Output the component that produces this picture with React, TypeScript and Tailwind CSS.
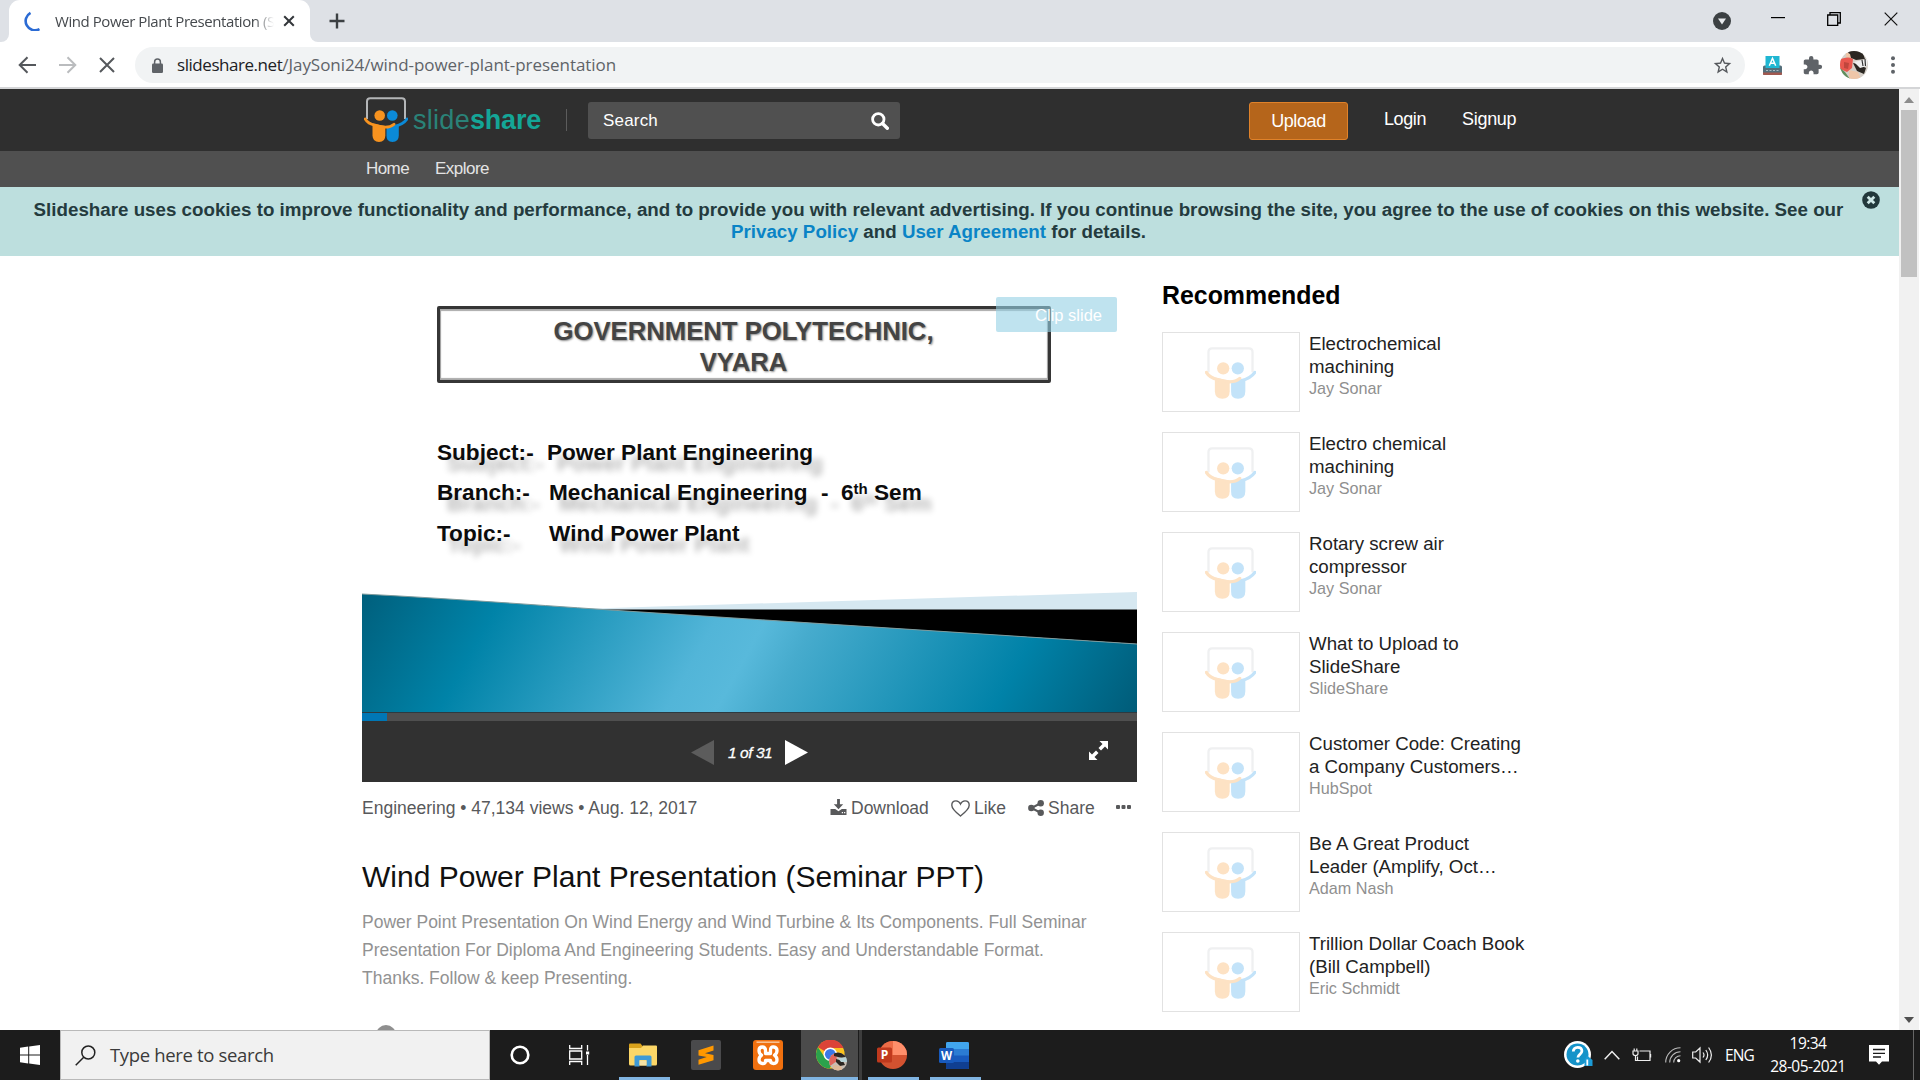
import React from "react";

const ARIAL = "font-['Liberation_Sans',Arial,sans-serif]";
const SEGOE = "font-['Open_Sans','Noto_Sans',sans-serif]";

function SlideshareMark({ faded = false, className = "" }: { faded?: boolean; className?: string }) {
  const screen = faded ? "#eff0f1" : "#b4b6b8";
  const orange = faded ? "#fde2c4" : "#f8931f";
  const blue = faded ? "#c3e3f9" : "#0b8ad8";
  return (
    <svg viewBox="0 0 44 46" className={className} fill="none" preserveAspectRatio="none">
      <path d="M3 22V4.500Q3 1.200 6.200 1.200h31.600Q41 1.200 41 4.500V22" stroke={screen} strokeWidth="2" />
      <circle cx="15.700" cy="18.500" r="5.300" fill={orange} />
      <circle cx="28.300" cy="18.500" r="5.300" fill={blue} />
      <path d="M22.500 29.500Q28 28 34.800 27.500V38.500Q34.800 45 28.500 45T22.500 38.500Z" fill={blue} />
      <path d="M43 22Q39.500 27.200 31 29.300" stroke={blue} strokeWidth="2.800" strokeLinecap="round" />
      <path d="M8.500 26.500L21.300 29V38.500Q21.300 45 15 45T8.500 38.500Z" fill={orange} />
      <path d="M1.200 22Q4 26.800 11 28.200Q24 32.600 30 27.200" stroke={orange} strokeWidth="2.800" strokeLinecap="round" />
    </svg>
  );
}

function TabStrip() {
  return (
    <div className="flex h-[42px] items-start bg-[#dee1e6]">
      <div className="flex h-[42px] w-[9px] items-end bg-white">
        <div className="h-[42px] w-[9px] rounded-br-[8px] bg-[#dee1e6]" />
      </div>
      <div className="flex h-[42px] w-[301px] items-center rounded-t-[11px] bg-white pl-[15px]">
        <svg viewBox="0 0 18 20" className="h-[20px] w-[18px]" fill="none">
          <path d="M6.500 1.800A9 9 0 0 0 15.500 18.200" stroke="#2b6bd4" strokeWidth="2.600" />
        </svg>
        <span className={`${SEGOE} ml-[13px] w-[219px] text-[15px] tracking-[-0.430px] whitespace-nowrap text-[#45494d] [mask-image:linear-gradient(to_right,black_91%,transparent)]`}>
          Wind Power Plant Presentation (S
        </span>
        <svg viewBox="0 0 12 12" className="ml-[9px] h-[12px] w-[12px]" stroke="#33363a" strokeWidth="2">
          <path d="M1.200 1.200l9.600 9.600M10.800 1.200l-9.600 9.600" />
        </svg>
      </div>
      <div className="flex h-[42px] w-[9px] items-end bg-white">
        <div className="h-[42px] w-[9px] rounded-bl-[8px] bg-[#dee1e6]" />
      </div>
      <svg viewBox="0 0 16 16" className="mt-[13px] ml-[10px] h-[16px] w-[16px]" stroke="#3c4043" strokeWidth="2.400">
        <path d="M8 .5v15M.5 8h15" />
      </svg>
      <svg viewBox="0 0 18 18" className="mt-[12px] ml-auto h-[18px] w-[18px]">
        <circle cx="9" cy="9" r="9" fill="#3c4043" />
        <path d="M5 6.500h8L9 12.500Z" fill="#e8eaed" />
      </svg>
      <svg viewBox="0 0 14 14" className="mt-[11px] ml-[40px] h-[14px] w-[14px]" stroke="#000" strokeWidth="1.200">
        <path d="M0 6.600h14" />
      </svg>
      <svg viewBox="0 0 14 14" className="mt-[12px] ml-[42px] h-[14px] w-[14px]" fill="none" stroke="#000" strokeWidth="1.300">
        <path d="M.7 3h10v10.300H.7ZM3 3V.7h10.300v10.300H10.700" />
      </svg>
      <svg viewBox="0 0 14 14" className="mt-[12px] mr-[22px] ml-[43px] h-[14px] w-[14px]" stroke="#111" strokeWidth="1.200">
        <path d="M.7.700l12.600 12.600M13.300.700L.7 13.300" />
      </svg>
    </div>
  );
}

function Avatar() {
  return (
    <svg viewBox="0 0 28 28" className="ml-[17px] h-[28px] w-[28px]">
      <defs>
        <clipPath id="avatarClip">
          <circle cx="14" cy="14" r="14" />
        </clipPath>
      </defs>
      <g clipPath="url(#avatarClip)">
        <path fill="#d5cfc8" d="M0 0h28v28H0z" />
        <path fill="#e9584f" d="M0 8l9-2 4 2-1 9-5 4-7-3z" />
        <path fill="#2b2723" d="M8 0h14l3 8-9 1-7-3zM13 12l5 1 8 4-2 6-7-3z" />
        <path fill="#efc6a8" d="M6 1l4 2 1 4-5-1zM9 19l9 2 3 7H9z" />
        <path fill="#efefef" d="M14 11l13-3v7l-7 2z" />
        <path stroke="#333" strokeWidth="1.200" d="M22 9l1 6M25 8l.5 7" />
        <path fill="#5f8f5c" d="M0 17l5 4 5 7H2z" />
        <path fill="#c0463d" d="M4 11l5 1-1 6-4-1z" />
      </g>
    </svg>
  );
}

function AddressBar() {
  return (
    <div className="flex h-[45px] items-center bg-white pt-[1px] pl-[18px]">
      <svg viewBox="0 0 18 18" className="h-[18px] w-[18px]" fill="none" stroke="#55585c" strokeWidth="2">
        <path d="M9.500 1.200L1.700 9l7.800 7.800M1.700 9H18" />
      </svg>
      <svg viewBox="0 0 18 18" className="ml-[23px] h-[18px] w-[18px]" fill="none" stroke="#babcbe" strokeWidth="2">
        <path d="M8.500 1.200L16.300 9l-7.800 7.800M16.300 9H0" />
      </svg>
      <svg viewBox="0 0 16 16" className="ml-[22px] h-[16px] w-[16px]" fill="none" stroke="#55585c" strokeWidth="2">
        <path d="M1 1l14 14M15 1L1 15" />
      </svg>
      <div className="ml-[20px] flex h-[36px] w-[1610px] items-center rounded-full bg-[#f1f3f4] pl-[17px]">
        <svg viewBox="0 0 11 15" className="h-[15px] w-[11px]">
          <path d="M2.600 6.500V4a2.900 2.900 0 0 1 5.800 0v2.500" fill="none" stroke="#5f6368" strokeWidth="1.500" />
          <rect y="5.500" width="11" height="9.500" rx="1.200" fill="#5f6368" />
        </svg>
        <span className={`${SEGOE} ml-[14px] text-[17px] whitespace-nowrap`}>
          <span className="tracking-[-0.450px] text-[#202124]">slideshare.net</span>
          <span className="tracking-[-0.050px] text-[#5f6368]">/JaySoni24/wind-power-plant-presentation</span>
        </span>
        <svg viewBox="0 0 24 24" className="mr-[12px] ml-auto h-[21px] w-[21px]" fill="#55585c">
          <path d="M22 9.240l-7.190-.62L12 2 9.190 8.630 2 9.240l5.460 4.730L5.820 21 12 17.270 18.180 21l-1.630-7.030L22 9.240zM12 15.400l-3.760 2.270 1-4.280-3.320-2.880 4.380-.38L12 6.100l1.710 4.040 4.380.38-3.320 2.880 1 4.280L12 15.400z" />
        </svg>
      </div>
      <svg viewBox="0 0 19 19" className="ml-[18px] h-[19px] w-[19px]">
        <rect x="0" y="9.500" width="19" height="9.500" rx="1.500" fill="#546e7a" />
        <path fill="#a1584f" d="M0 16.500h19V18q0 1-1 1H1q-1 0-1-1z" />
        <path d="M3 14.500h2M6.500 14.500h2M10 14.500h2M13.500 14.500h2" stroke="#a9bac1" strokeWidth="1.200" />
        <path fill="#1fb6d2" d="M2.500 0h14v12h-14z" />
        <path d="M6.300 9.800L9.500 2.300l3.200 7.500M7.400 7.300h4.200" fill="none" stroke="#fff" strokeWidth="1.500" />
      </svg>
      <svg viewBox="0 0 24 24" className="ml-[20px] h-[21px] w-[21px]" fill="#5f6368">
        <path d="M20.500 11H19V7c0-1.100-.9-2-2-2h-4V3.500a2.500 2.500 0 0 0-5 0V5H4c-1.100 0-1.990.9-1.990 2v3.800H3.500c1.490 0 2.700 1.210 2.700 2.700s-1.210 2.700-2.700 2.700H2V20c0 1.100.9 2 2 2h3.800v-1.500c0-1.490 1.210-2.700 2.700-2.700 1.490 0 2.700 1.210 2.700 2.700V22H17c1.100 0 2-.9 2-2v-4h1.500a2.500 2.500 0 0 0 0-5z" />
      </svg>
      <Avatar />
      <svg viewBox="0 0 4 18" className="ml-[23px] h-[18px] w-[4px]" fill="#5f6368">
        <circle cx="2" cy="2.200" r="2" />
        <circle cx="2" cy="9" r="2" />
        <circle cx="2" cy="15.800" r="2" />
      </svg>
    </div>
  );
}

function SiteHeader() {
  return (
    <header className={ARIAL}>
      <div className="flex h-[62px] items-start bg-[#2f2f2f] pl-[364px] text-white">
        <SlideshareMark className="mt-[8px] h-[46px] w-[44px]" />
        <div className="mt-[15px] ml-[5px] text-[27px] leading-[32px]">
          <span className="tracking-[0.290px] text-[#2a8278]">slide</span>
          <span className="font-bold tracking-[-0.210px] text-[#14a697]">share</span>
        </div>
        <div className="mt-[20px] ml-[25px] h-[22px] w-px bg-[#5c5c5c]" />
        <div className="mt-[13px] ml-[21px] flex h-[37px] w-[312px] items-center justify-between rounded-[3px] bg-[#505050] pr-[11px] pl-[15px]">
          <span className="text-[17px] tracking-[0.190px]">Search</span>
          <svg viewBox="0 0 18 18" className="h-[18px] w-[18px]" fill="none" stroke="#fff">
            <circle cx="7.300" cy="7.300" r="5.700" strokeWidth="2.800" />
            <path d="M11.500 11.500l4.800 4.800" strokeWidth="3.400" strokeLinecap="round" />
          </svg>
        </div>
        <div className="mt-[13px] ml-[349px] flex h-[38px] w-[99px] items-center justify-center rounded-[3px] border border-[#e0822a] bg-[#b5651b] text-[18px] tracking-[-0.400px]">
          Upload
        </div>
        <span className="mt-[17px] ml-[36px] text-[18px] leading-[26px] tracking-[-0.400px]">Login</span>
        <span className="mt-[17px] ml-[36px] text-[18px] leading-[26px] tracking-[-0.300px]">Signup</span>
      </div>
      <nav className="flex h-[36px] items-center bg-[#505050] pl-[366px] text-[17px] text-[#e4e4e4]">
        <span className="tracking-[-0.580px]">Home</span>
        <span className="ml-[26px] tracking-[-0.520px]">Explore</span>
      </nav>
      <div className="relative h-[69px] bg-[#bddfde] pt-[12px] text-center text-[18.750px] leading-[22px] font-bold text-[#243b3e]">
        <p className="mr-[22px] whitespace-nowrap">
          Slideshare uses cookies to improve functionality and performance, and to provide you with relevant advertising. If you continue browsing the site, you agree to the use of cookies on this website. See our
          <br />
          <span className="text-[#0a84c6]">Privacy Policy</span> and <span className="text-[#0a84c6]">User Agreement</span> for details.
        </p>
        <svg viewBox="0 0 18 18" className="absolute top-[4px] right-[19px] h-[18px] w-[18px]">
          <circle cx="9" cy="9" r="8.800" fill="#22383b" />
          <path d="M5.700 5.700l6.600 6.600M12.300 5.700l-6.600 6.600" stroke="#cfe8e7" strokeWidth="2.800" />
        </svg>
      </div>
    </header>
  );
}

const SHADOW = "[text-shadow:10px_11px_6px_rgba(0,0,0,0.28)]";

function Slide() {
  return (
    <div className="relative flex h-[456px] flex-col bg-white">
      <div className="mt-[50px] ml-[75px] flex h-[77px] w-[614px] shrink-0 flex-col items-center justify-center rounded-[2px] border-[3px] border-[#363636] pt-[5px] pr-[1px] text-[25.700px] leading-[31px] font-bold text-[#444] shadow-[inset_0_2px_1px_#aaa,inset_0_-2px_1px_#aaa,inset_1px_0_1px_#999,inset_-1px_0_1px_#999] [text-shadow:1px_1px_2px_rgba(0,0,0,0.45)]">
        <span>GOVERNMENT POLYTECHNIC,</span>
        <span>VYARA</span>
      </div>
      <div className={`mt-[50px] ml-[75px] flex flex-col text-[22.600px] leading-[39.500px] font-bold whitespace-nowrap text-[#0c0c0c] ${SHADOW}`}>
        <div className="flex">
          <span className="w-[110px]">Subject:-</span>
          <span>Power Plant Engineering</span>
        </div>
        <div className="flex">
          <span className="w-[112px]">Branch:-</span>
          <span className="w-[272px]">Mechanical Engineering</span>
          <span className="w-[20px]">-</span>
          <span>
            6<span className="relative top-[-6px] text-[15px]">th</span> Sem
          </span>
        </div>
        <div className="flex">
          <span className="w-[112px]">Topic:-</span>
          <span>Wind Power Plant</span>
        </div>
      </div>
      <svg viewBox="0 0 775 120" className="mt-auto h-[120px] w-[775px] shrink-0">
        <defs>
          <linearGradient id="wave" gradientUnits="userSpaceOnUse" x1="0" y1="0" x2="642" y2="356">
            <stop offset="0" stopColor="#005f7c" />
            <stop offset="0.170" stopColor="#0083a8" />
            <stop offset="0.440" stopColor="#52b5d8" />
            <stop offset="0.500" stopColor="#58b9db" />
            <stop offset="0.560" stopColor="#46abcd" />
            <stop offset="0.830" stopColor="#0082a8" />
            <stop offset="1" stopColor="#005c79" />
          </linearGradient>
        </defs>
        <path d="M215 17L775 0v18H240Z" fill="#d6e8f1" />
        <path d="M235 17.500H775V52Z" fill="#000" />
        <path d="M0 2C80 6 160 12 248 18L775 52V120H0Z" fill="url(#wave)" />
        <path d="M0 2C80 6 160 12 248 18L775 52" fill="none" stroke="#7e9a9c" strokeWidth="1" />
      </svg>
      <div className="absolute top-[41px] left-[634px] flex h-[35px] w-[121px] items-center justify-end rounded-[2px] bg-[#94d0e4]/60 pt-[2px] pr-[15px] text-[16.500px] text-white">
        Clip slide
      </div>
    </div>
  );
}

function PlayerControls() {
  return (
    <div>
      <div className="h-[9px] border-t border-[#2d3a40] bg-[#4f4f4f]">
        <div className="h-[8px] w-[25px] bg-[#0077b5]" />
      </div>
      <div className="flex h-[61px] items-center bg-[#313131] pt-[2px]">
        <svg viewBox="0 0 23 25" className="ml-[329px] h-[25px] w-[23px]">
          <path d="M23 0v25L0 12.500Z" fill="#5c5c5c" />
        </svg>
        <span className="ml-[14px] w-[57px] text-[15.500px] tracking-[-0.450px] whitespace-nowrap text-white italic [-webkit-text-stroke:0.300px_white]">1 of 31</span>
        <svg viewBox="0 0 23 25" className="h-[25px] w-[23px]">
          <path d="M0 0v25L23 12.500Z" fill="#fff" />
        </svg>
        <svg viewBox="0 0 19 19" className="mr-[29px] mb-[4px] ml-auto h-[19px] w-[19px]" fill="#fff">
          <path d="M10.500 0H19v8.500l-3-3-4 4L9.500 7l4-4ZM8.500 19H0v-8.500l3 3 4-4L9.500 12l-4 4Z" />
        </svg>
      </div>
    </div>
  );
}

function MetaRow() {
  return (
    <div className="mt-[13px] flex h-[26px] items-center text-[17.500px] whitespace-nowrap text-[#58595b]">
      <span>Engineering • 47,134 views • Aug. 12, 2017</span>
      <svg viewBox="0 0 17 17" className="mb-[3px] ml-auto h-[16px] w-[17px]" fill="#58595b">
        <path d="M7 0h3v5.500h3.500L8.500 11 3.500 5.500H7ZM0 10.500h5l3.500 2.600L12 10.500h5V17H0Z" />
        <path d="M12 14.500h1.300M14.400 14.500h1.300" stroke="#fff" strokeWidth="1.200" />
      </svg>
      <span className="ml-[4px] w-[78px]">Download</span>
      <svg viewBox="0 0 19 17" className="ml-[22px] h-[17px] w-[19px]" fill="none" stroke="#58595b" strokeWidth="1.400">
        <path d="M9.500 16C5 12.500.8 9.200.8 5.300.8 2.600 2.700.9 5 .9c2 0 3.600 1.200 4.500 3.100C10.400 2.100 12 .9 14 .9c2.300 0 4.200 1.700 4.200 4.400 0 3.900-4.200 7.200-8.700 10.700Z" />
      </svg>
      <span className="ml-[4px] w-[33px]">Like</span>
      <svg viewBox="0 0 16 16" className="ml-[21px] h-[16px] w-[16px]" fill="#58595b">
        <path d="M13 3L3.500 8l9.500 5" fill="none" stroke="#58595b" strokeWidth="2" />
        <circle cx="3.300" cy="8" r="3.200" />
        <circle cx="12.700" cy="3.200" r="3.200" />
        <circle cx="12.700" cy="12.800" r="3.200" />
      </svg>
      <span className="ml-[4px] w-[48px]">Share</span>
      <svg viewBox="0 0 15 4" className="mr-[6px] mb-[2px] ml-[20px] h-[4px] w-[15px]" fill="#58595b">
        <rect width="4" height="4" rx="1" />
        <rect x="5.500" width="4" height="4" rx="1" />
        <rect x="11" width="4" height="4" rx="1" />
      </svg>
    </div>
  );
}

const recommended = [
  { lines: ["Electrochemical", "machining"], author: "Jay Sonar" },
  { lines: ["Electro chemical", "machining"], author: "Jay Sonar" },
  { lines: ["Rotary screw air", "compressor"], author: "Jay Sonar" },
  { lines: ["What to Upload to", "SlideShare"], author: "SlideShare" },
  { lines: ["Customer Code: Creating", "a Company Customers…"], author: "HubSpot" },
  { lines: ["Be A Great Product", "Leader (Amplify, Oct…"], author: "Adam Nash" },
  { lines: ["Trillion Dollar Coach Book", "(Bill Campbell)"], author: "Eric Schmidt" },
];

function Recommended() {
  return (
    <aside className="ml-[25px] w-[380px]">
      <h2 className="mt-[25px] text-[24.900px] leading-[28px] font-bold text-black">Recommended</h2>
      <ul className="mt-[23px]">
        {recommended.map((item, i) => (
          <li key={i} className="flex h-[100px] items-start">
            <div className="flex h-[80px] w-[138px] items-start justify-center border border-[#e2e2e2] bg-white pt-[14px] pr-[2px]">
              <SlideshareMark faded className="h-[53px] w-[51px]" />
            </div>
            <div className="ml-[9px] whitespace-nowrap">
              <p className="text-[18.700px] leading-[23px] text-[#222]">
                {item.lines[0]}
                <br />
                {item.lines[1]}
              </p>
              <p className="text-[16.200px] leading-[21px] text-[#8f8f8f]">{item.author}</p>
            </div>
          </li>
        ))}
      </ul>
    </aside>
  );
}

function Scrollbar() {
  return (
    <div className="flex w-[20px] flex-col items-center bg-[#f1f1f1]">
      <svg viewBox="0 0 10 6" className="mt-[8px] h-[6px] w-[10px]" fill="#8c8c8c">
        <path d="M0 6L5 0l5 6Z" />
      </svg>
      <div className="mt-[7px] h-[167px] w-[16px] bg-[#c1c1c1]" />
      <svg viewBox="0 0 10 6" className="mt-auto mb-[7px] h-[6px] w-[10px]" fill="#505050">
        <path d="M0 0h10L5 6Z" />
      </svg>
    </div>
  );
}

function ChromeIcon() {
  return (
    <svg viewBox="0 0 32 31" className="h-[31px] w-[32px]">
      <defs>
        <clipPath id="chromeBadge">
          <circle cx="22" cy="21.500" r="9" />
        </clipPath>
      </defs>
      <circle cx="14.300" cy="14.300" r="14.300" fill="#fcc31e" />
      <path d="M14.300 14.300L1.920 7.150A14.300 14.300 0 0 1 27.500 8H14.300Z" fill="#dc4437" />
      <path d="M1.920 7.150A14.300 14.300 0 0 0 13.500 28.600L20 18 8.500 17Z" fill="#2ba24c" />
      <circle cx="14.300" cy="14.300" r="6.800" fill="#fff" />
      <circle cx="14.300" cy="14.300" r="5.400" fill="#3b78e7" />
      <g clipPath="url(#chromeBadge)">
        <path fill="#c9beb4" d="M12 12h20v19H12z" />
        <path fill="#e0655b" d="M12 15l8-2 1 8-7 5z" />
        <path fill="#2c2621" d="M18 12h11l2 5-5 1-8-2zM20 19l7 2 2 4-5 1-4-4z" />
        <path fill="#b9d3d6" d="M22 18l10-1v5l-7 0z" />
        <path fill="#dfb897" d="M17 25l8 1 2 5H17z" />
      </g>
    </svg>
  );
}

function TaskbarApp({ open = false, children }: { open?: boolean; children: React.ReactNode }) {
  return (
    <div className="flex h-[50px] w-[51px] flex-col items-center">
      <div className="flex h-[47px] items-center pt-[3px]">{children}</div>
      {open && <div className="h-[3px] w-full bg-[#80b4e2]" />}
    </div>
  );
}

function Taskbar() {
  return (
    <footer className={`${SEGOE} flex h-[50px] shrink-0 items-stretch bg-[#1c1c1c] text-white`}>
      <div className="flex w-[60px] items-center justify-center">
        <svg viewBox="0 0 20 20" className="h-[20px] w-[20px]" fill="#fff">
          <path d="M0 2.800L8.200 1.600V9.500H0ZM9.200 1.500L20 0v9.500H9.200ZM0 10.500h8.200v7.900L0 17.200ZM9.200 10.500H20V20L9.200 18.500Z" />
        </svg>
      </div>
      <div className="flex w-[430px] items-center border border-[#b9b9b9] bg-[#f1f1f1] pl-[14px] text-[#3a3a3a]">
        <svg viewBox="0 0 21 21" className="h-[21px] w-[21px]" fill="none" stroke="#222" strokeWidth="1.500">
          <circle cx="13.300" cy="7.500" r="6.500" />
          <path d="M8.700 12.200L.7 20.200" />
        </svg>
        <span className="ml-[14px] text-[18.500px] tracking-[-0.340px] whitespace-nowrap">Type here to search</span>
      </div>
      <svg viewBox="0 0 20 20" className="ml-[20px] h-[20px] w-[20px] self-center" fill="none">
        <circle cx="10" cy="10" r="8.300" stroke="#fff" strokeWidth="2.600" />
      </svg>
      <svg viewBox="0 0 21 20" className="ml-[39px] h-[20px] w-[21px] self-center" fill="none" stroke="#fff" strokeWidth="1.300">
        <path d="M.7 0v3.500h12V0M.7 20v-3.500h12V20M.7 6h12v8H.7ZM18.500 0v5.500M18.500 10v10" />
        <path d="M17 6.500h3.200v3H17Z" fill="#fff" stroke="none" />
      </svg>
      <div className="ml-[29px] flex">
        <TaskbarApp open>
          <svg viewBox="0 0 28 24" className="mr-[3px] h-[24px] w-[28px]">
            <path fill="#d9a21b" d="M0 1.500Q0 .5 1 .5h10.500l2 2.500v3H0Z" />
            <path fill="#fbd667" d="M0 5h12l2-2.500h13q1 0 1 1V21q0 1.500-1.500 1.500h-25Q0 22.500 0 21Z" />
            <path fill="#3e9ad6" d="M5.500 14q0-1.500 1.500-1.500h14q1.500 0 1.500 1.500v9.500h-5V17h-7v6.500h-5Z" />
            <path fill="#f6e3a5" d="M10.500 17.500h7v5h-7z" />
          </svg>
        </TaskbarApp>
        <div className="ml-[10px]">
          <TaskbarApp>
            <svg viewBox="0 0 30 30" className="h-[30px] w-[30px]">
              <rect width="30" height="30" rx="2" fill="#4a4a4c" />
              <path fill="#ff9800" d="M7.500 10.200L22.500 5.500v5l-8.500 2.700 8.500 1.800v5.300L7.500 24.800v-5l8.200-2.700-8.200-1.700Z" />
            </svg>
          </TaskbarApp>
        </div>
        <div className="ml-[11px]">
          <TaskbarApp>
            <svg viewBox="0 0 30 30" className="h-[30px] w-[30px]">
              <rect width="30" height="30" rx="3" fill="#f0700f" />
              <path d="M3.500 2.200h23" stroke="#f7c59a" strokeWidth="1.500" />
              <path d="M12.500 13.500V10.500Q12.500 7 9.300 7T6 10.500Q6 13.500 8.500 15.200Q6 17 6 20T9.300 23.500 12.500 20.500H17.500Q17.500 23.500 20.700 23.500T24 20Q24 17 21.500 15.200Q24 13.500 24 10.500T20.700 7 17.500 10.500V13.500Z" fill="none" stroke="#fff" strokeWidth="3.300" strokeLinejoin="round" />
            </svg>
          </TaskbarApp>
        </div>
        <div className="ml-[8px] flex h-[50px]">
          <div className="flex h-[50px] w-[57px] flex-col items-center bg-[#4b4b4b]">
            <div className="flex h-[47px] items-center pt-[3px] pl-[5px]">
              <ChromeIcon />
            </div>
            <div className="h-[3px] w-full bg-[#80b4e2]" />
          </div>
          <div className="w-[4px] border-l border-[#1c1c1c] bg-[#3d3d3d]" />
        </div>
        <div className="ml-[6px]">
          <TaskbarApp open>
            <svg viewBox="0 0 30 28" className="mr-[3px] h-[28px] w-[30px]">
              <circle cx="16" cy="14" r="14" fill="#d35230" />
              <path d="M16 0a14 14 0 0 1 14 14H16Z" fill="#ff8f6b" />
              <path d="M16 0a14 14 0 0 0-14 14h14Z" fill="#ed6c47" />
              <rect y="6.500" width="15" height="15" rx="1.500" fill="#c0391d" />
              <text x="7.400" y="18.300" textAnchor="middle" fontSize="12" fontWeight="700" fill="#fff">P</text>
            </svg>
          </TaskbarApp>
        </div>
        <div className="ml-[11px]">
          <TaskbarApp open>
            <svg viewBox="0 0 30 27" className="mr-[4px] h-[27px] w-[30px]">
              <rect x="7" width="23" height="27" rx="1.500" fill="#2b7cd3" />
              <path d="M7 1.500Q7 0 8.500 0h20Q30 0 30 1.500V7H7Z" fill="#41a5ee" />
              <path d="M7 13.500h23V20H7Z" fill="#185abd" />
              <path d="M7 20h23v5.500q0 1.500-1.500 1.500h-20Q7 27 7 25.500Z" fill="#103f91" />
              <rect y="6" width="15" height="15" rx="1.500" fill="#185abd" />
              <text x="7.500" y="17.700" textAnchor="middle" fontSize="11.500" fontWeight="700" fill="#fff">W</text>
            </svg>
          </TaskbarApp>
        </div>
      </div>
      <div className="ml-auto flex items-center">
        <svg viewBox="0 0 29 28" className="h-[28px] w-[29px]">
          <circle cx="13.500" cy="13.500" r="13.500" fill="#fff" />
          <circle cx="13.500" cy="13.500" r="11" fill="#1593c9" />
          <path d="M9.300 10.500c0-2.600 1.800-4.200 4.300-4.200s4.300 1.500 4.300 3.800c0 3.200-4 3.200-4 6.400" fill="none" stroke="#fff" strokeWidth="2.800" />
          <circle cx="13.800" cy="20" r="1.800" fill="#fff" />
          <path d="M23 14.500l5.500 4.500v6h-8v-6Z" fill="#1b9bd6" />
          <path d="M23.300 18.500v6" stroke="#fff" strokeWidth="1.800" />
        </svg>
        <svg viewBox="0 0 16 10" className="ml-[11px] h-[10px] w-[16px]" fill="none" stroke="#eee" strokeWidth="1.500">
          <path d="M.7 9.200L8 1.500l7.300 7.700" />
        </svg>
        <svg viewBox="0 0 20 14" className="ml-[12px] h-[14px] w-[20px]" fill="none" stroke="#eee" strokeWidth="1.200">
          <path d="M7.500 3H18v9.500H5.500V8.500M18.600 6v3.500M1 3h5v2.500Q6 7.500 3.500 7.500 1 7.500 1 5.500ZM2.200 3V.500M4.800 3V.500M3.500 7.500v5h2" />
        </svg>
        <svg viewBox="0 0 16 16" className="ml-[13px] h-[16px] w-[16px]" fill="none" stroke="#eee" strokeWidth="1.100">
          <path d="M.7 15.500A14.800 14.800 0 0 1 15.500 .700M4.700 15.500A10.800 10.800 0 0 1 15.500 4.700M8.700 15.500A6.800 6.800 0 0 1 15.500 8.700" stroke="#bbb" />
          <circle cx="13.700" cy="13.700" r="1.600" fill="#fff" stroke="none" />
        </svg>
        <svg viewBox="0 0 21 18" className="ml-[11px] h-[18px] w-[21px]" fill="none" stroke="#eee" strokeWidth="1.200">
          <path d="M.7 6h3L8 2v14l-4.300-4h-3ZM11 6.500q2 2.500 0 5M13.800 4q3.700 5 0 10M16.600 1.500q5.600 7.500 0 15" />
        </svg>
        <span className="ml-[12px] w-[29px] pt-[1px] text-[15.500px] tracking-[-0.900px]">ENG</span>
        <div className="ml-[16px] flex w-[76px] flex-col items-center text-[15.500px] leading-[23px] tracking-[-0.550px] whitespace-nowrap">
          <span>19:34</span>
          <span>28-05-2021</span>
        </div>
        <svg viewBox="0 0 20 20" className="ml-[23px] h-[20px] w-[20px]">
          <path d="M0 0h20v16.500h-7L10 19.700 7 16.500H0Z" fill="#fff" />
          <path d="M4 4.500h12M4 8.300h12M4 12h8" stroke="#1c1c1c" strokeWidth="1.300" />
        </svg>
        <div className="mr-[6px] ml-[24px] h-[50px] w-px bg-[#666]" />
      </div>
    </footer>
  );
}

export default function App() {
  return (
    <div className="flex h-[1080px] w-[1920px] flex-col overflow-hidden bg-white">
      <TabStrip />
      <AddressBar />
      <div className="h-[2px] shrink-0 bg-[#d4d5d7]" />
      <div className="flex h-[941px] shrink-0 overflow-hidden">
        <div className={`${ARIAL} flex w-[1899px] flex-col overflow-hidden`}>
          <SiteHeader />
          <main className="flex min-h-0 flex-1 items-start overflow-hidden pl-[362px]">
            <section className="w-[775px]">
              <Slide />
              <PlayerControls />
              <MetaRow />
              <h1 className="mt-[38px] text-[30px] leading-[36px] whitespace-nowrap text-[#111]">
                Wind Power Plant Presentation (Seminar PPT)
              </h1>
              <p className="mt-[13px] text-[17.500px] leading-[28px] whitespace-nowrap text-[#929292]">
                Power Point Presentation On Wind Energy and Wind Turbine &amp; Its Components. Full Seminar
                <br />
                Presentation For Diploma And Engineering Students. Easy and Understandable Format.
                <br />
                Thanks. Follow &amp; keep Presenting.
              </p>
              <div className="mt-[33px] ml-[14px] h-[20px] w-[20px] rounded-full bg-[#8f8f8f]" />
            </section>
            <Recommended />
          </main>
        </div>
        <Scrollbar />
      </div>
      <Taskbar />
    </div>
  );
}
